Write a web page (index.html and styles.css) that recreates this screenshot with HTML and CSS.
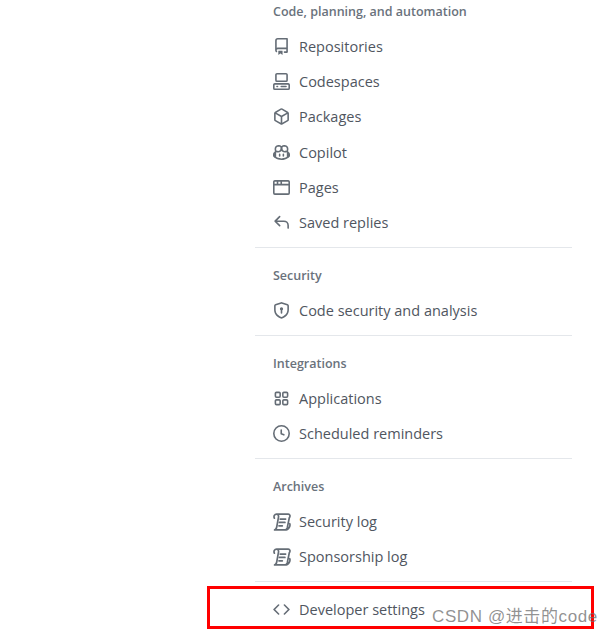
FILE: index.html
```html
<!DOCTYPE html>
<html lang="en">

<head>
    <meta charset="UTF-8">
    <title>Settings</title>
    <link rel="stylesheet" href="styles.css">
</head>

<body>
    <nav class="side-menu">
        <section class="menu-group first">
            <h3>Code, planning, and automation</h3>
            <a class="menu-item"><svg viewBox="0 0 16 16"><path d="M2 2.5A2.5 2.5 0 0 1 4.5 0h8.75a.75.75 0 0 1 .75.75v12.5a.75.75 0 0 1-.75.75h-2.5a.75.75 0 0 1 0-1.5h1.75v-2h-8a1 1 0 0 0-.714 1.7.75.75 0 1 1-1.072 1.05A2.495 2.495 0 0 1 2 11.5Zm10.5-1h-8a1 1 0 0 0-1 1v6.708A2.486 2.486 0 0 1 4.5 9h8ZM5 12.25a.25.25 0 0 1 .25-.25h3.5a.25.25 0 0 1 .25.25v3.25a.25.25 0 0 1-.4.2l-1.45-1.087a.249.249 0 0 0-.3 0L5.4 15.7a.25.25 0 0 1-.4-.2Z"/></svg>Repositories</a>
            <a class="menu-item"><svg viewBox="0 0 16 16"><path d="M0 11.25c0-.966.784-1.75 1.75-1.75h12.5c.966 0 1.75.784 1.75 1.75v3A1.75 1.75 0 0 1 14.25 16H1.75A1.75 1.75 0 0 1 0 14.25Zm2-9.5C2 .784 2.784 0 3.75 0h8.5C13.216 0 14 .784 14 1.75v5a1.75 1.75 0 0 1-1.75 1.75h-8.5A1.75 1.75 0 0 1 2 6.75Zm1.75-.25a.25.25 0 0 0-.25.25v5c0 .138.112.25.25.25h8.5a.25.25 0 0 0 .25-.25v-5a.25.25 0 0 0-.25-.25Zm-2 9.5a.25.25 0 0 0-.25.25v3c0 .138.112.25.25.25h12.5a.25.25 0 0 0 .25-.25v-3a.25.25 0 0 0-.25-.25Z"/><path d="M7 12.75a.75.75 0 0 1 .75-.75h4.5a.75.75 0 0 1 0 1.5h-4.5a.75.75 0 0 1-.75-.75Zm-4 0a.75.75 0 0 1 .75-.75h.5a.75.75 0 0 1 0 1.5h-.5a.75.75 0 0 1-.75-.75Z"/></svg>Codespaces</a>
            <a class="menu-item"><svg viewBox="0 0 16 16"><path d="m8.878.392 5.25 3.045c.54.314.872.89.872 1.514v6.098a1.75 1.75 0 0 1-.872 1.514l-5.25 3.045a1.75 1.75 0 0 1-1.756 0l-5.25-3.045A1.75 1.75 0 0 1 1 11.049V4.951c0-.624.332-1.201.872-1.514L7.122.392a1.75 1.75 0 0 1 1.756 0ZM7.875 1.69l-4.63 2.685L8 7.133l4.755-2.758-4.63-2.685a.248.248 0 0 0-.25 0ZM2.5 5.677v5.372c0 .09.047.171.125.216l4.625 2.683V8.432Zm6.25 8.271 4.625-2.683a.25.25 0 0 0 .125-.216V5.677L8.75 8.432Z"/></svg>Packages</a>
            <a class="menu-item"><svg viewBox="0 0 16 16"><path d="M7.998 15.035c-4.562 0-7.873-2.914-7.998-3.749V9.338c.085-.628.677-1.686 1.588-2.065.013-.07.024-.143.036-.218.029-.183.06-.384.126-.612-.201-.508-.254-1.084-.254-1.656 0-.87.128-1.769.693-2.484.579-.733 1.494-1.124 2.724-1.261 1.206-.134 2.262.034 2.944.765.05.053.096.108.139.165.044-.057.094-.112.143-.165.682-.731 1.738-.899 2.944-.765 1.23.137 2.145.528 2.724 1.261.566.715.693 1.614.693 2.484 0 .572-.053 1.148-.254 1.656.066.228.098.429.126.612.012.076.024.148.037.218.924.385 1.522 1.471 1.591 2.095v1.872c0 .766-3.351 3.795-8.002 3.795Zm0-1.485c2.28 0 4.584-1.11 5.002-1.433V7.862l-.023-.116c-.49.21-1.075.291-1.727.291-1.146 0-2.059-.327-2.71-.991A3.222 3.222 0 0 1 8 6.303a3.24 3.24 0 0 1-.544.743c-.65.664-1.563.991-2.71.991-.652 0-1.236-.081-1.727-.291l-.023.116v4.255c.419.323 2.722 1.433 5.002 1.433ZM6.762 2.83c-.193-.206-.637-.413-1.682-.297-1.019.113-1.479.404-1.713.7-.247.312-.369.789-.369 1.554 0 .793.129 1.171.308 1.371.162.181.519.379 1.442.379.853 0 1.339-.235 1.638-.54.315-.322.527-.827.617-1.553.117-.935-.037-1.395-.241-1.614Zm4.155-.297c-1.044-.116-1.488.091-1.681.297-.204.219-.359.679-.242 1.614.091.726.303 1.231.618 1.553.299.305.784.54 1.638.54.922 0 1.28-.198 1.442-.379.179-.2.308-.578.308-1.371 0-.765-.123-1.242-.37-1.554-.233-.296-.693-.587-1.713-.7Z"/><path d="M6.25 9.037a.75.75 0 0 1 .75.75v1.501a.75.75 0 0 1-1.5 0V9.787a.75.75 0 0 1 .75-.75Zm4.25.75v1.501a.75.75 0 0 1-1.5 0V9.787a.75.75 0 0 1 1.5 0Z"/></svg>Copilot</a>
            <a class="menu-item"><svg viewBox="0 0 16 16"><path d="M0 2.75C0 1.784.784 1 1.75 1h12.5c.966 0 1.75.784 1.75 1.75v10.5A1.75 1.75 0 0 1 14.25 15H1.75A1.75 1.75 0 0 1 0 13.25ZM14.5 6h-13v7.25c0 .138.112.25.25.25h12.5a.25.25 0 0 0 .25-.25Zm-6-3.5v2h6V2.75a.25.25 0 0 0-.25-.25ZM5 2.5v2h2v-2Zm-3.25 0a.25.25 0 0 0-.25.25V4.5h2v-2Z"/></svg>Pages</a>
            <a class="menu-item"><svg viewBox="0 0 16 16"><path d="M6.78 1.97a.75.75 0 0 1 0 1.06L3.81 6h6.44A4.75 4.75 0 0 1 15 10.75v2.5a.75.75 0 0 1-1.5 0v-2.5a3.25 3.25 0 0 0-3.25-3.25H3.81l2.97 2.97a.749.749 0 0 1-.326 1.275.749.749 0 0 1-.734-.215L1.47 7.28a.75.75 0 0 1 0-1.06l4.25-4.25a.75.75 0 0 1 1.06 0Z"/></svg>Saved replies</a>
        </section>
        <section class="menu-group">
            <h3>Security</h3>
            <a class="menu-item"><svg viewBox="0 0 16 16"><path d="m8.533.133 5.25 1.68A1.75 1.75 0 0 1 15 3.48V7c0 1.566-.32 3.182-1.303 4.682-.983 1.498-2.585 2.813-5.032 3.855a1.697 1.697 0 0 1-1.33 0c-2.447-1.042-4.049-2.357-5.032-3.855C1.32 10.182 1 8.566 1 7V3.48a1.75 1.75 0 0 1 1.217-1.667l5.25-1.68a1.748 1.748 0 0 1 1.066 0Zm-.61 1.429.001.001-5.25 1.68a.251.251 0 0 0-.174.237V7c0 1.36.275 2.666 1.057 3.859.784 1.194 2.121 2.342 4.366 3.298a.196.196 0 0 0 .154 0c2.245-.957 3.582-2.103 4.366-3.297C13.225 9.666 13.5 8.358 13.5 7V3.48a.25.25 0 0 0-.174-.238l-5.25-1.68a.25.25 0 0 0-.153 0ZM9.5 6.5c0 .536-.286 1.032-.75 1.3v2.45a.75.75 0 0 1-1.5 0V7.8A1.5 1.5 0 1 1 9.5 6.5Z"/></svg>Code security and analysis</a>
        </section>
        <section class="menu-group">
            <h3>Integrations</h3>
            <a class="menu-item"><svg viewBox="0 0 16 16"><path d="M1.5 3.25c0-.966.784-1.75 1.75-1.75h2.5c.966 0 1.75.784 1.75 1.75v2.5A1.75 1.75 0 0 1 5.75 7.5h-2.5A1.75 1.75 0 0 1 1.5 5.75Zm7 0c0-.966.784-1.75 1.75-1.75h2.5c.966 0 1.75.784 1.75 1.75v2.5a1.75 1.75 0 0 1-1.75 1.75h-2.5A1.75 1.75 0 0 1 8.5 5.75Zm-7 7c0-.966.784-1.75 1.75-1.75h2.5c.966 0 1.75.784 1.75 1.75v2.5a1.75 1.75 0 0 1-1.75 1.75h-2.5a1.75 1.75 0 0 1-1.75-1.75Zm7 0c0-.966.784-1.75 1.75-1.75h2.5c.966 0 1.75.784 1.75 1.75v2.5a1.75 1.75 0 0 1-1.75 1.75h-2.5a1.75 1.75 0 0 1-1.75-1.75ZM3.25 3a.25.25 0 0 0-.25.25v2.5c0 .138.112.25.25.25h2.5A.25.25 0 0 0 6 5.75v-2.5A.25.25 0 0 0 5.75 3Zm7 0a.25.25 0 0 0-.25.25v2.5c0 .138.112.25.25.25h2.5a.25.25 0 0 0 .25-.25v-2.5a.25.25 0 0 0-.25-.25Zm-7 7a.25.25 0 0 0-.25.25v2.5c0 .138.112.25.25.25h2.5a.25.25 0 0 0 .25-.25v-2.5a.25.25 0 0 0-.25-.25Zm7 0a.25.25 0 0 0-.25.25v2.5c0 .138.112.25.25.25h2.5a.25.25 0 0 0 .25-.25v-2.5a.25.25 0 0 0-.25-.25Z"/></svg>Applications</a>
            <a class="menu-item"><svg viewBox="0 0 16 16"><path d="M8 0a8 8 0 1 1 0 16A8 8 0 0 1 8 0ZM1.5 8a6.5 6.5 0 1 0 13 0 6.5 6.5 0 0 0-13 0Zm7-3.25v2.992l2.028.812a.75.75 0 0 1-.557 1.392l-2.5-1A.751.751 0 0 1 7 8.25v-3.5a.75.75 0 0 1 1.5 0Z"/></svg>Scheduled reminders</a>
        </section>
        <section class="menu-group">
            <h3>Archives</h3>
            <a class="menu-item"><svg class="stroked" viewBox="0 0 16 16"><path d="M1.2 4.6C.4 3 1.3 1 3.2 1h10.4c1.4 0 2 1.8 1 3.2M3.2 1c1.5 0 2 1.7 1.6 3.2L3.4 12c-.3 1.6-1 3-2 3h9c1.2 0 2-.7 2.3-2l1.8-8.8M14.9 9.5c.6 1.6-.4 5.5-4.5 5.5M6.4 5.4h4.8M5.8 8.4h4.8M5.3 11.4h3"/></svg>Security log</a>
            <a class="menu-item"><svg class="stroked" viewBox="0 0 16 16"><path d="M1.2 4.6C.4 3 1.3 1 3.2 1h10.4c1.4 0 2 1.8 1 3.2M3.2 1c1.5 0 2 1.7 1.6 3.2L3.4 12c-.3 1.6-1 3-2 3h9c1.2 0 2-.7 2.3-2l1.8-8.8M14.9 9.5c.6 1.6-.4 5.5-4.5 5.5M6.4 5.4h4.8M5.8 8.4h4.8M5.3 11.4h3"/></svg>Sponsorship log</a>
        </section>
        <section class="menu-group last">
            <a class="menu-item"><svg viewBox="0 0 16 16"><path d="m11.28 3.22 4.25 4.25a.75.75 0 0 1 0 1.06l-4.25 4.25a.749.749 0 0 1-1.275-.326.749.749 0 0 1 .215-.734L13.94 8l-3.72-3.72a.749.749 0 0 1 .326-1.275.749.749 0 0 1 .734.215Zm-6.56 0a.751.751 0 0 1 1.042.018.751.751 0 0 1 .018 1.042L2.06 8l3.72 3.72a.749.749 0 0 1-.326 1.275.749.749 0 0 1-.734-.215L.47 8.53a.75.75 0 0 1 0-1.06Z"/></svg>Developer settings</a>
        </section>
    </nav>

    <div class="red-box"></div>
    <div class="watermark">CSDN @进击的code</div>
</body>

</html>
```

FILE: styles.css
```css
body {
    font-family: "Open Sans", "Noto Sans", sans-serif;
    background-color: #fff;
    margin: 0;
    height: 634px;
    overflow: hidden;
}

.side-menu {
    width: 317px;
    margin-left: 255px;
}

.menu-group {
    padding: 16px 0 6.9px;
    border-bottom: 1px solid #e4e7eb;
}

.menu-group.first {
    padding-top: 0;
}

.menu-group.last {
    padding: 9.5px 0 0;
    border-bottom: none;
}

.menu-group h3 {
    height: 24px;
    line-height: 24px;
    margin: 0 0 4.9px 18px;
    font-size: 12.5px;
    font-weight: 600;
    color: #6a727c;
}

.menu-item {
    display: flex;
    align-items: center;
    gap: 9px;
    height: 35.2px;
    padding-left: 18px;
    font-size: 14.5px;
    color: #50565f;
}

.menu-item svg {
    width: 17px;
    height: 17px;
    fill: #656d76;
    flex-shrink: 0;
}

.menu-item svg.stroked {
    fill: none;
    stroke: #656d76;
    stroke-width: 1.5;
    stroke-linejoin: round;
    stroke-linecap: round;
    width: 18px;
    height: 18px;
    margin-right: -1px;
}

.red-box {
    position: absolute;
    left: 207px;
    top: 586px;
    width: 381px;
    height: 37px;
    border: 3px solid #f00;
}

.watermark {
    position: absolute;
    left: 432px;
    top: 602px;
    font-family: "Liberation Sans", "Noto Sans CJK SC", sans-serif;
    font-size: 17px;
    letter-spacing: 0.6px;
    color: rgba(110, 110, 110, 0.75);
    white-space: nowrap;
}
```
